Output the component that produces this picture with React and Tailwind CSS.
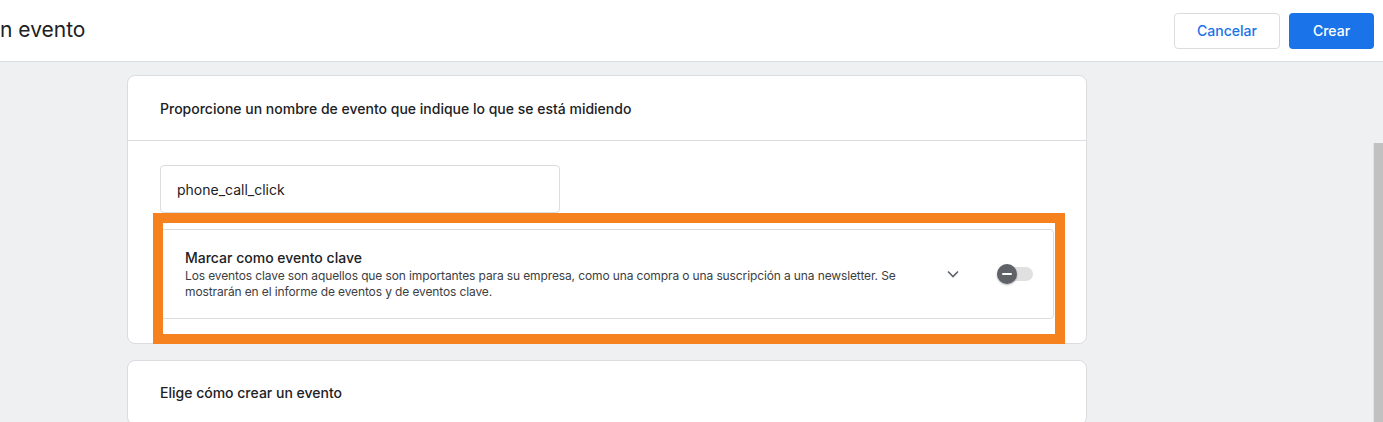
import { useState } from 'react'

const sans = "font-['Inter','Roboto',sans-serif]"
const body = "font-['Roboto','Liberation Sans',sans-serif]"

function Toggle({ on, onChange }) {
  return (
    <button
      type="button"
      onClick={() => onChange(!on)}
      aria-label="Marcar como evento clave"
      className="relative flex h-5 w-9 items-center"
    >
      <span className="h-[14px] w-9 rounded-full bg-[#e0e0e0]" />
      <span className="absolute left-0 top-0 grid h-5 w-5 place-items-center rounded-full bg-[#5f6368] shadow-[0_1px_2px_rgba(0,0,0,0.3)]">
        <span className="h-[2px] w-[10px] rounded-full bg-white" />
      </span>
    </button>
  )
}

function KeyEventPanel() {
  const [on, setOn] = useState(false)
  return (
    <div className="flex items-center rounded-[4px] border border-[#dadce0] py-[18px] pl-6 pr-5">
      <div className="w-[740px]">
        <p className={`${sans} text-[14px] font-medium leading-5 text-[#202124]`}>Marcar como evento clave</p>
        <p className={`${body} text-[12px] leading-4 tracking-[-0.12px] text-[#3c4043]`}>
          Los eventos clave son aquellos que son importantes para su empresa, como una compra o una suscripción a una
          newsletter. Se mostrarán en el informe de eventos y de eventos clave.
        </p>
      </div>
      <div className="ml-auto flex items-center gap-[38px]">
        <svg width="12" height="8" viewBox="0 0 12 8" className="text-[#5f6368]">
          <path d="M1 1.5l5 5 5-5" fill="none" stroke="currentColor" strokeWidth="1.6" />
        </svg>
        <Toggle on={on} onChange={setOn} />
      </div>
    </div>
  )
}

export default function App() {
  const [name, setName] = useState('phone_call_click')
  return (
    <div className={`${sans} flex h-[422px] w-[1383px] flex-col overflow-hidden bg-[#eff0f2]`}>
      <header className="flex h-[62px] shrink-0 items-center justify-between border-b border-[#dadce0] bg-white pr-[9px]">
        <h1 className="-mt-[1px] text-[21px] font-normal text-[#202124]">n evento</h1>
        <div className="flex items-center gap-[9px]">
          <button
            type="button"
            className="h-[36px] w-[106px] rounded-[4px] border border-[#dadce0] bg-white text-[14px] font-medium text-[#1a73e8]"
          >
            Cancelar
          </button>
          <button type="button" className="h-[36px] w-[85px] rounded-[4px] bg-[#1a73e8] text-[14px] font-medium text-white">
            Crear
          </button>
        </div>
      </header>

      <div className="flex min-h-0 flex-1">
        <main className="flex-1 pl-[127px] pt-[13px]">
          <div className="flex w-[960px] flex-col gap-[16px]">
            <section className="relative rounded-lg border border-[#dadce0] bg-white">
              <div className="flex h-[65px] items-center border-b border-[#dadce0] px-8">
                <h2 className="text-[14px] font-medium text-[#202124]">
                  Proporcione un nombre de evento que indique lo que se está midiendo
                </h2>
              </div>
              <div className="flex flex-col gap-[16px] px-8 pb-6 pt-6">
                <input
                  value={name}
                  onChange={(e) => setName(e.target.value)}
                  className={`${sans} h-[48px] w-[400px] rounded-[4px] border border-[#dadce0] px-4 text-[14px] text-[#202124] outline-none`}
                />
                <KeyEventPanel />
              </div>
              {/* orange highlight drawn over the panel */}
              <div className="pointer-events-none absolute left-[25px] top-[137px] h-[131px] w-[912px] border-[10px] border-[#f5821f]" />
            </section>

            <section className="rounded-lg border border-[#dadce0] bg-white">
              <div className="flex h-[63px] items-center px-8">
                <h2 className="text-[14px] font-medium text-[#202124]">Elige cómo crear un evento</h2>
              </div>
            </section>
          </div>
        </main>
        <div className="w-[10px] shrink-0 pt-[81px]">
          <div className="h-full border-l border-[#e4e4e4] bg-[#c1c1c1]" />
        </div>
      </div>
    </div>
  )
}
